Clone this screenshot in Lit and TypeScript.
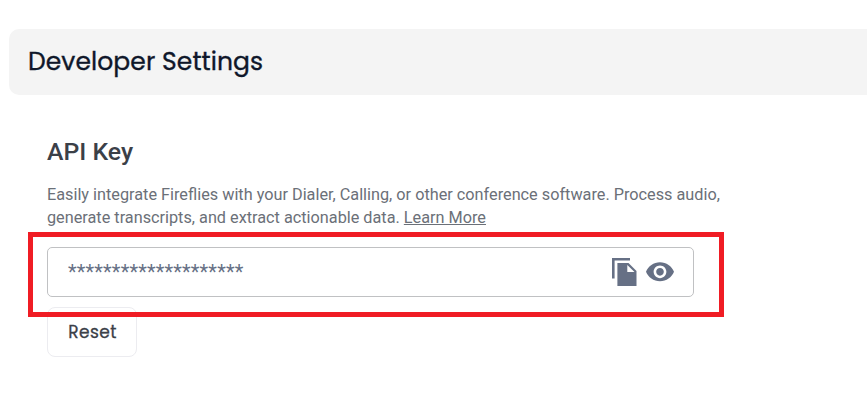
import { LitElement, html, css } from "lit";
import { customElement, property } from "lit/decorators.js";

@customElement("app-root")
export class AppRoot extends LitElement {
  @property() keyMask = "*".repeat(20);

  static styles = css`
    :host {
      display: block;
      box-sizing: border-box;
      height: 409px;
      padding: 29px 0 0 9px;
      overflow: hidden;
      position: relative;
      background: #fff;
      font-family: Roboto, "Liberation Sans", sans-serif;
    }
    h1, h2, p { margin: 0; }
    .bar {
      display: flex;
      align-items: center;
      box-sizing: border-box;
      height: 66px;
      padding: 0 19px;
      background: #f4f4f4;
      border-radius: 10px 0 0 10px;
    }
    h1 {
      font: 400 25px/36px Poppins, Inter, sans-serif;
      letter-spacing: 0.08px;
      -webkit-text-stroke: 0.35px #0f172a;
      color: #0f172a;
      white-space: nowrap;
    }
    .content {
      display: flex;
      flex-direction: column;
      align-items: flex-start;
      padding: 41px 0 0 38px;
    }
    h2 {
      font-size: 24.8px;
      line-height: 32px;
      font-weight: 500;
      color: #3b4048;
    }
    .intro {
      margin-top: 15px;
      font-size: 16.25px;
      line-height: 23px;
      color: #6b7078;
      white-space: nowrap;
    }
    .intro a { color: inherit; text-decoration: underline; }
    .field {
      position: relative;
      display: flex;
      align-items: center;
      box-sizing: border-box;
      width: 647px;
      height: 50px;
      margin-top: 18px;
      padding: 0 19px 0 20px;
      border: 1px solid #c0c1c3;
      border-radius: 5px;
      color: #667085;
    }
    .mask {
      flex: 1;
      font-size: 20px;
      line-height: 24px;
      letter-spacing: 0.16px;
    }
    .icons { display: flex; align-items: center; gap: 9px; }
    svg { display: block; fill: #667085; }
    .highlight {
      position: absolute;
      left: -20px;
      top: -16px;
      box-sizing: border-box;
      width: 696px;
      height: 85px;
      border: 5px solid #f01c24;
      z-index: 1;
    }
    button {
      box-sizing: border-box;
      width: 90px;
      height: 50px;
      margin: 10px 0 0;
      padding: 0 0 0 1px;
      border: 1px solid #ececf0;
      border-radius: 8px;
      background: #fff;
      font: 400 17px/24px Poppins, Inter, sans-serif;
      letter-spacing: 0.4px;
      -webkit-text-stroke: 0.3px #3b4048;
      color: #3b4048;
    }
  `;

  render() {
    return html`
      <header class="bar"><h1>Developer Settings</h1></header>
      <main class="content">
        <h2>API Key</h2>
        <p class="intro">
          Easily integrate Fireflies with your Dialer, Calling, or other conference software. Process audio,<br />
          generate transcripts, and extract actionable data. <a>Learn More</a>
        </p>
        <div class="field">
          <span class="mask">${this.keyMask}</span>
          <span class="icons">
            <svg width="25" height="28" viewBox="0 0 25 28" aria-label="Copy">
              <path d="M0 0H18V2.6H2.6V20.4H0Z" />
              <path fill-rule="evenodd" d="M5.4 5H16.5L24.5 13V28H5.4ZM15.3 7V14H22.5Z" />
            </svg>
            <svg width="28" height="20" viewBox="1 4.3 22 15.7" preserveAspectRatio="none" aria-label="Show">
              <path d="M12 4.5C7 4.5 2.73 7.61 1 12c1.73 4.39 6 7.5 11 7.5s9.27-3.11 11-7.5c-1.73-4.39-6-7.5-11-7.5zM12 17c-2.76 0-5-2.24-5-5s2.24-5 5-5 5 2.24 5 5-2.24 5-5 5zm0-8c-1.66 0-3 1.34-3 3s1.34 3 3 3 3-1.34 3-3-1.34-3-3-3z" />
            </svg>
          </span>
          <span class="highlight"></span>
        </div>
        <button>Reset</button>
      </main>
    `;
  }
}
